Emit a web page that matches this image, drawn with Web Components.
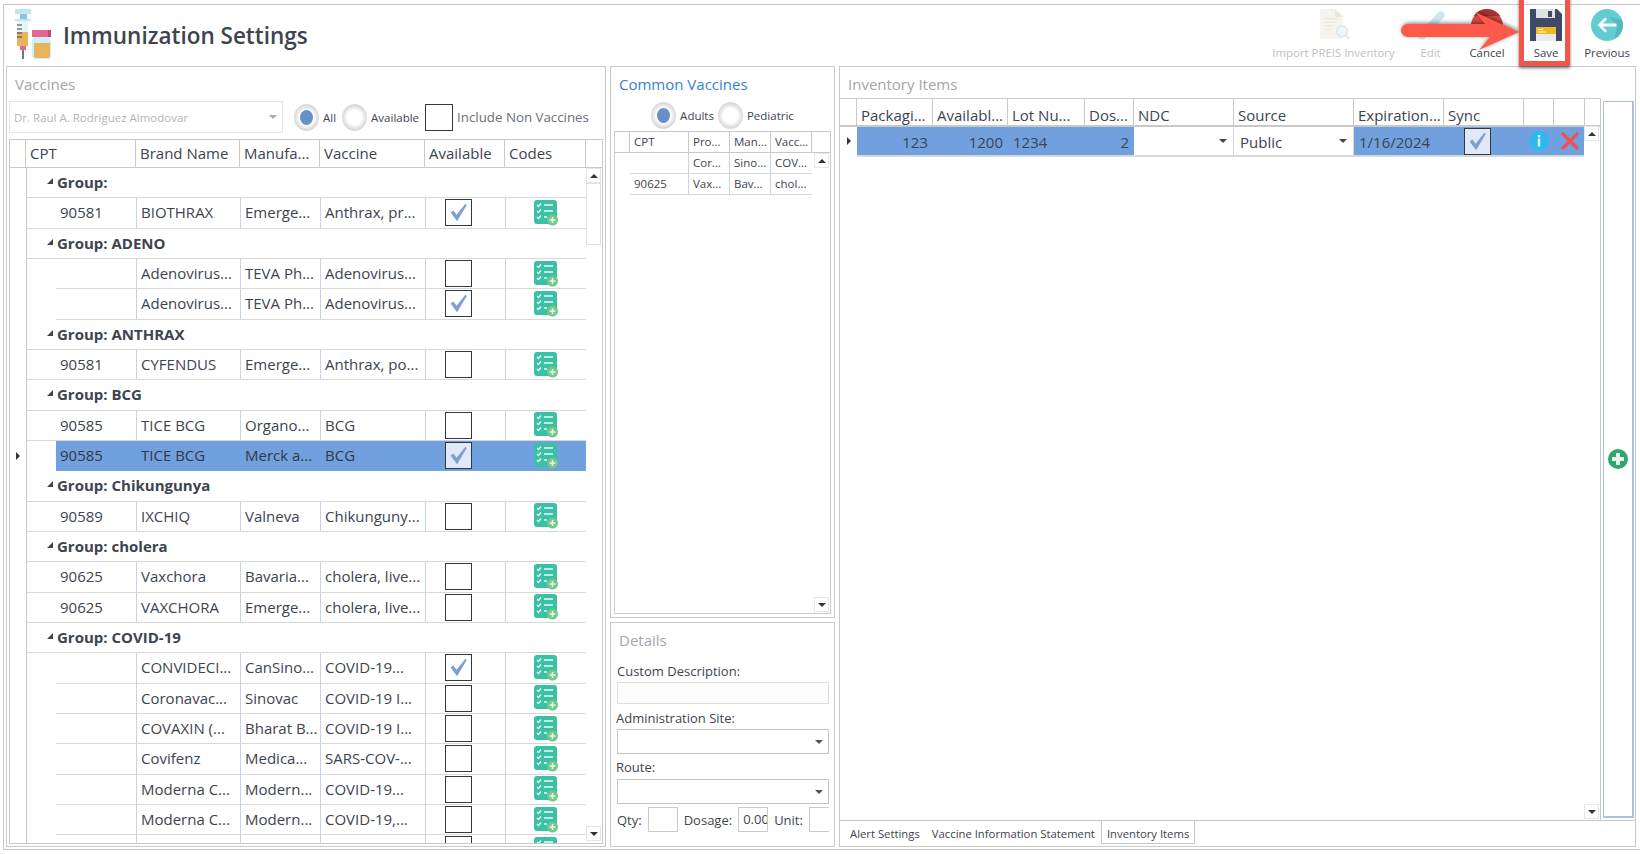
<!DOCTYPE html>
<html>
<head>
<meta charset="utf-8">
<title>Immunization Settings</title>
<style>
  html, body { margin: 0; height: 100%; background: #fff; overflow: hidden; }
  body { font-family: "Open Sans", "Noto Sans", sans-serif; color: #3d4450; }
</style>
</head>
<body>
<immunization-app></immunization-app>

<script>
// icons
const ICONS = {
  codes: `<svg viewBox="0 0 26 26" width="26" height="26">
    <rect x="1" y="0" width="23" height="24" rx="3" fill="#3bbfa5"/>
    <g fill="none" stroke="#e8fbf5" stroke-width="1.3">
      <path d="M4 5l1.5 1.5L8 3.5M4 11l1.5 1.5L8 9.500M4 17l1.5 1.5L8 15.500"/>
      <path d="M11 5h9M11 11h9M11 17h3"/>
    </g>
    <circle cx="19.500" cy="20" r="5.500" fill="#72c888"/>
    <path d="M19.500 17v6M16.500 20h6" stroke="#e8f8ec" stroke-width="1.600"/>
  </svg>`,
  check: `<svg viewBox="0 0 26 26" width="26" height="26"><path d="M5 13.500l3-2 3.500 4.500L21 4l1.500 1.500L12 23z" fill="#7f9fd2"/></svg>`,
  vaccine: `<svg viewBox="0 0 37 50" width="37" height="50">
    <path d="M0 0h16v5H0z" fill="#bfe6f2"/><path d="M5 5h7v5H5z" fill="#8fc4dc"/>
    <path d="M0 10h16v2H0z" fill="#bfe6f2"/>
    <path d="M2 12h11v11H2z" fill="#e6f3f7"/><path d="M2 23h11v14H2z" fill="#e7b45c"/>
    <path d="M2 16h5M2 20h5M2 24h5M2 28h5" stroke="#33415a" stroke-width="1.200"/>
    <path d="M5 37h6v4H5z" fill="#e2688d"/><path d="M7 41h2v9H7z" fill="#777"/>
    <path d="M17 21h19v7H17z" fill="#e2688d"/><path d="M33 21h3v7h-3z" fill="#b84f70"/>
    <path d="M19 28h15c1 2 2 3 2 6v13c0 2-1 3-3 3H20c-2 0-3-1-3-3V34c0-3 1-4 2-6z" fill="#cfeef7"/>
    <path d="M19 34h16v13c0 1-1 2-2 2H21c-1 0-2-1-2-2z" fill="#e7b45c"/>
  </svg>`,
  doc: `<svg viewBox="0 0 36 36" width="32" height="32">
    <path d="M2 0h17l9 9v25H2z" fill="#f4f2ea"/><path d="M19 0l9 9h-9z" fill="#e7e3d4"/>
    <path d="M7 11h14M7 15h14M7 19h10M7 23h8" stroke="#e8e5d8" stroke-width="1.500"/>
    <circle cx="27" cy="25" r="6" fill="#e8f3f8" stroke="#cfdfe8" stroke-width="1.500"/>
    <path d="M31 29l4 5" stroke="#d3dfe6" stroke-width="2"/>
  </svg>`,
  edit: `<svg viewBox="0 0 36 36" width="32" height="32"><path d="M4 28L26 4c2-2 4-2 6 0s2 4 0 6L10 34H4z" fill="#bfe1ec"/></svg>`,
  cancel: `<svg viewBox="0 0 36 36" width="32" height="32"><path d="M0.500 23A18 18 0 1 1 35.500 23z" fill="#d94a45"/><path d="M3 8a18 18 0 0 1 30 0z" fill="#a8322f"/></svg>`,
  save: `<svg viewBox="0 0 32 32" width="32" height="32">
    <path d="M0 0h27l5 5v27H0z" fill="#404a68"/>
    <path d="M6 0h19v9H6z" fill="#dfe3e4"/><path d="M18 2h4v6h-4z" fill="#404a68"/>
    <path d="M6 18h20v14H6z" fill="#e9eced"/><path d="M6 18h20v7H6z" fill="#eeb91f"/>
    <path d="M8 20.500h5M8 23h8" stroke="#fff" stroke-width="1.100"/>
  </svg>`,
  previous: `<svg viewBox="0 0 34 34" width="32" height="32">
    <circle cx="17" cy="17" r="17" fill="#62cdd0"/>
    <path d="M19 8l9 9-3 15a17 17 0 0 0 9-15 17 17 0 0 0-1-5z" fill="#49b2b8" opacity=".7"/>
    <path d="M15 9l-8 8 8 8 2-2-4.500-4.500H27v-3H12.500L17 11z" fill="#fff"/>
  </svg>`,
  info: `<svg viewBox="0 0 20 20" width="20" height="20"><circle cx="10" cy="10" r="10" fill="#2fb8f0"/><rect x="8.800" y="4" width="2.400" height="2.400" fill="#e6f8ff"/><rect x="8.800" y="7.500" width="2.400" height="8" fill="#e6f8ff"/></svg>`,
  cross: `<svg viewBox="0 0 20 20" width="20" height="20"><path d="M2 2l16 16M18 2L2 18" stroke="#ee5150" stroke-width="3.400"/></svg>`,
  add: `<svg viewBox="0 0 20 20" width="20" height="20"><circle cx="10" cy="10" r="10" fill="#2ea66d"/><path d="M10 4v12M4 10h12" stroke="#e6f3ec" stroke-width="4"/></svg>`,
};

// group box with a caption
class GroupPanel extends HTMLElement {
  connectedCallback() {
    const root = this.shadowRoot || this.attachShadow({ mode: 'open' });
    const color = this.getAttribute('caption-color') || '#a3a6aa';
    root.innerHTML = `<style>
      :host { display: flex; flex-direction: column; box-sizing: border-box; border: 1px solid #c9c9c9; background: #fff; min-height: 0; min-width: 0; overflow: hidden; }
      .cap { flex: none; font-size: 15px; line-height: 20px; padding: 7px 0 0 8px; height: 31px; box-sizing: border-box; color: ${color}; white-space: nowrap; }
      .body { flex: 1; min-height: 0; display: flex; flex-direction: column; }
    </style><div class="cap">${this.getAttribute('caption') || ''}</div><div class="body"><slot></slot></div>`;
  }
}

// one toolbar button, icon over label
class ToolButton extends HTMLElement {
  connectedCallback() {
    const root = this.shadowRoot || this.attachShadow({ mode: 'open' });
    const off = this.hasAttribute('disabled');
    root.innerHTML = `<style>
      :host { display: flex; flex-direction: column; align-items: center; width: ${this.getAttribute('w')}px; }
      .i { height: 33px; display: flex; align-items: flex-start; justify-content: center; ${off ? 'opacity:.8;' : ''} }
      .t { font-size: 11.400px; line-height: 16px; margin-top: 3px; white-space: nowrap; color: ${off ? '#c0bfbc' : '#3d4450'}; }
    </style><div class="i">${ICONS[this.getAttribute('icon')]}</div><div class="t">${this.getAttribute('label')}</div>`;
  }
}

class RadioOpt extends HTMLElement {
  connectedCallback() {
    const root = this.shadowRoot || this.attachShadow({ mode: 'open' });
    const on = this.hasAttribute('checked');
    root.innerHTML = `<style>
      :host { display: inline-flex; align-items: center; gap: 4px; font-size: 11.500px; color: #3d4450; }
      .r { width: 25px; height: 27px; border-radius: 50%; background: radial-gradient(circle, #fff 38%, #d8d8d8 68%, #efefef 100%); display: flex; align-items: center; justify-content: center; }
      .d { width: 13px; height: 15px; border-radius: 50%; background: ${on ? '#6790c9' : '#fff'}; }
    </style><span class="r"><span class="d"></span></span><span>${this.getAttribute('label')}</span>`;
  }
}

class CheckBox extends HTMLElement {
  connectedCallback() {
    const root = this.shadowRoot || this.attachShadow({ mode: 'open' });
    const bg = this.getAttribute('bg') || 'transparent';
    root.innerHTML = `<style>
      :host { display: inline-block; box-sizing: border-box; width: 27px; height: 27px; border: 1.500px solid #33383f; background: ${bg}; flex: none; }
      svg { display: block; margin: 0; width: 24px; height: 24px; }
    </style>${this.hasAttribute('checked') ? ICONS.check : ''}`;
  }
}

class ComboBox extends HTMLElement {
  connectedCallback() {
    const root = this.shadowRoot || this.attachShadow({ mode: 'open' });
    root.innerHTML = `<style>
      :host { display: flex; align-items: center; box-sizing: border-box; border: 1px solid var(--combo-border, #c4c4c4); background: #fff; height: 25px; overflow: hidden; }
      .v { flex: 1; padding-left: 4px; padding-top: var(--combo-pad, 0); white-space: nowrap; overflow: hidden; }
      .a { flex: none; width: 0; height: 0; margin: 0 5px; border: 4px solid transparent; border-top: 4px solid var(--combo-arrow, #444); border-bottom: 0; }
    </style><span class="v"><slot></slot></span><span class="a"></span>`;
  }
}

// scrollbar track with the two arrow buttons, sits over the grid edge
class GridScroll extends HTMLElement {
  connectedCallback() {
    const root = this.shadowRoot || this.attachShadow({ mode: 'open' });
    const thumb = this.getAttribute('thumb');
    root.innerHTML = `<style>
      :host { display: flex; flex-direction: column; align-items: stretch; justify-content: space-between; width: 15px; box-sizing: border-box; background: #fff; }
      .b { height: 15px; box-sizing: border-box; border: 1px solid #e6e6e6; display: flex; align-items: center; justify-content: center; background: #fff; flex: none; }
      .u { width: 0; height: 0; border: 4px solid transparent; border-bottom: 4px solid #333; border-top: 0; }
      .d { width: 0; height: 0; border: 4px solid transparent; border-top: 4px solid #333; border-bottom: 0; }
      .th { height: ${thumb || 0}px; border: 1px solid #e0e0e0; box-sizing: border-box; margin-top: 0; ${thumb ? '' : 'display:none;'} }
      .sp { flex: 1; }
    </style><div class="b"><span class="u"></span></div><div class="th"></div><div class="sp"></div><div class="b"><span class="d"></span></div>`;
  }
}

class VaccinesGrid extends HTMLElement {
  connectedCallback() {
    const root = this.attachShadow({ mode: 'open' });
    const data = [
      ['g', 'Group:'],
      ['90581', 'BIOTHRAX', 'Emerge...', 'Anthrax, pr...', 1],
      ['g', 'Group: ADENO'],
      ['', 'Adenovirus...', 'TEVA Ph...', 'Adenovirus...', 0],
      ['', 'Adenovirus...', 'TEVA Ph...', 'Adenovirus...', 1],
      ['g', 'Group: ANTHRAX'],
      ['90581', 'CYFENDUS', 'Emerge...', 'Anthrax, po...', 0],
      ['g', 'Group: BCG'],
      ['90585', 'TICE BCG', 'Organo...', 'BCG', 0],
      ['90585', 'TICE BCG', 'Merck a...', 'BCG', 1, 'sel'],
      ['g', 'Group: Chikungunya'],
      ['90589', 'IXCHIQ', 'Valneva', 'Chikunguny...', 0],
      ['g', 'Group: cholera'],
      ['90625', 'Vaxchora', 'Bavaria...', 'cholera, live...', 0],
      ['90625', 'VAXCHORA', 'Emerge...', 'cholera, live...', 0],
      ['g', 'Group: COVID-19'],
      ['', 'CONVIDECI...', 'CanSino...', 'COVID-19...', 1],
      ['', 'Coronavac...', 'Sinovac', 'COVID-19 I...', 0],
      ['', 'COVAXIN (...', 'Bharat B...', 'COVID-19 I...', 0],
      ['', 'Covifenz', 'Medica...', 'SARS-COV-...', 0],
      ['', 'Moderna C...', 'Modern...', 'COVID-19...', 0],
      ['', 'Moderna C...', 'Modern...', 'COVID-19,...', 0],
      ['', '', '', '', 0],
    ];
    const rows = data.map(r => {
      if (r[0] === 'g') {
        return `<div class="g"><span class="tri"></span><b>${r[1]}</b></div>`;
      }
      const sel = r[5] === 'sel';
      return `<div class="r ${sel ? 'sel' : ''}">
        <div class="mark">${sel ? '<span class="ptr"></span>' : ''}</div>
        <div class="c cpt ${r[0] ? '' : 'blank'}">${r[0]}</div>
        <div class="c">${r[1]}</div><div class="c">${r[2]}</div><div class="c">${r[3]}</div>
        <div class="c mid chk"><check-box ${r[4] ? 'checked' : ''} ${sel ? 'bg="#dfe9f7"' : ''}></check-box></div>
        <div class="c mid ic">${ICONS.codes}</div>
      </div>`;
    }).join('');
    root.innerHTML = `<style>
      :host { display: block; position: relative; flex: 1; min-height: 0; margin: 0 2px 2px 2px; border: 1px solid #c9c9c9; overflow: hidden; font-size: 15px; color: #3d4450; }
      .h { display: grid; grid-template-columns: 16px 110px 104px 80px 105px 80px 81px 17px; height: 27px; border-bottom: 1px solid #c9c9c9; }
      .h div { border-right: 1px solid #c9c9c9; padding-left: 4px; line-height: 26px; white-space: nowrap; overflow: hidden; }
      .h div:last-child { border-right: 0; }
      .list { margin-left: 16px; border-left: 1px solid #c9c9c9; }
      .g { height: 30.330px; box-sizing: border-box; width: 559px; border-bottom: 1px solid #d8d8d8; line-height: 29px; padding-left: 20px; display: flex; align-items: center; gap: 4px; }
      .g b { font-weight: 700; font-size: 15px; }
      .tri { width: 0; height: 0; border-style: solid; border-width: 0 0 6px 6px; border-color: transparent transparent #444 transparent; margin-top: -3px; }
      .r { display: grid; grid-template-columns: 29px 81px 104px 80px 105px 80px 81px; height: 30.330px; width: 560px; box-sizing: border-box; position: relative; }
      .mark { position: absolute; left: -17px; width: 16px; top: 0; bottom: 0; display: flex; align-items: center; justify-content: center; }
      .ptr { width: 0; height: 0; border: 4px solid transparent; border-left: 4px solid #333; border-right: 0; }
      .r .c { border-right: 1px solid #c5d4e6; border-bottom: 1px solid #d8d8d8; padding-left: 4px; line-height: 29px; white-space: nowrap; overflow: hidden; box-sizing: border-box; }
      .r .c.mid { display: flex; align-items: center; justify-content: center; padding: 0; }
      .r .c.chk { padding-right: 14px; }
      .r .c.ic { border-right: 0; padding-right: 2px; }
      .r .cpt { text-align: left; grid-column: 1 / 3; padding-left: 33px; border-right: 1px solid #c5d4e6; }
      .r .cpt.blank { grid-column: 1 / 3; margin-left: 29px; }
      .sel .c { background: #71a0df; color: #33393f; border-color: #71a0df; border-right-color: #71a0df; }
      .sel .cpt { margin-left: 29px; padding-left: 4px; }
      svg { display: block; }
      grid-scroll { position: absolute; right: 1px; top: 28px; bottom: 2px; }
    </style>
    <div class="h"><div></div><div>CPT</div><div>Brand Name</div><div>Manufa...</div><div>Vaccine</div><div>Available</div><div>Codes</div><div></div></div>
    <div class="list">${rows}</div>
    <grid-scroll thumb="62"></grid-scroll>`;
  }
}

class CommonGrid extends HTMLElement {
  connectedCallback() {
    const root = this.attachShadow({ mode: 'open' });
    const row = (a, b, c, d) => `<div class="r"><div class="${a ? '' : 'e'}">${a}</div><div>${b}</div><div>${c}</div><div>${d}</div></div>`;
    root.innerHTML = `<style>
      :host { display: block; position: relative; flex: 1; min-height: 0; margin: 2px 3px 3px 3px; border: 1px solid #c9c9c9; font-size: 11.500px; overflow: hidden; color: #3d4450; }
      .h, .r { display: grid; grid-template-columns: 59px 41px 41px 41px; margin-left: 15px; }
      .h { height: 20px; border-bottom: 1px solid #c9c9c9; margin-left: 0; grid-template-columns: 15px 59px 41px 41px 41px; }
      .h div { border-right: 1px solid #c9c9c9; line-height: 20px; padding-left: 4px; overflow: hidden; white-space: nowrap; }
      .h div:first-child { padding: 0; }
      .r { height: 21px; }
      .r div { border-right: 1px solid #c5d4e6; border-bottom: 1px solid #d8d8d8; line-height: 20px; padding-left: 4px; overflow: hidden; white-space: nowrap; }
      .r div:last-child { border-right: 0; }
      grid-scroll { position: absolute; right: 1px; top: 21px; bottom: 1px; }
    </style>
    <div class="h"><div></div><div>CPT</div><div>Pro...</div><div>Man...</div><div>Vacc...</div></div>
    ${row('', 'Cor...', 'Sino...', 'COV...')}
    ${row('90625', 'Vax...', 'Bav...', 'chol...')}
    <grid-scroll></grid-scroll>`;
  }
}

class DetailsForm extends HTMLElement {
  connectedCallback() {
    const root = this.attachShadow({ mode: 'open' });
    root.innerHTML = `<style>
      :host { display: flex; flex-direction: column; font-size: 13px; color: #3d4450; padding: 0 5px 0 5px; --combo-arrow: #555; }
      .l { line-height: 18px; white-space: nowrap; }
      .txt { height: 22px; box-sizing: border-box; border: 1px solid #dcdcdc; background: #fdfdfd; margin: 2px 0 0 1px; }
      combo-box { margin: 2px 0 0 1px; }
      .qty { display: flex; align-items: center; margin-top: 3px; white-space: nowrap; overflow: hidden; margin-left: 1px; }
      .box { box-sizing: border-box; height: 25px; border: 1px solid #c9c9c9; flex: none; font-size: 13px; line-height: 23px; padding-left: 4px; overflow: hidden; }
    </style>
    <div class="l" style="margin:8px 0 0 1px">Custom Description:</div>
    <div class="txt"></div>
    <div class="l" style="margin-top:5px">Administration Site:</div>
    <combo-box></combo-box>
    <div class="l" style="margin-top:4px">Route:</div>
    <combo-box style="margin-top:3px"></combo-box>
    <div class="qty">Qty:<div class="box" style="width:30px;margin:0 6px 0 6px"></div>Dosage:<div class="box" style="width:30px;margin:0 6px;">0.00</div>Unit:<div class="box" style="width:30px;margin-left:6px"></div></div>`;
  }
}

class InventoryGrid extends HTMLElement {
  connectedCallback() {
    const root = this.attachShadow({ mode: 'open' });
    root.innerHTML = `<style>
      :host { display: block; position: relative; flex: 1; min-height: 0; font-size: 15px; color: #3d4450; overflow: hidden; border-top: 1px solid #c9c9c9; }
      .h { display: grid; grid-template-columns: 17px 76px 75px 77px 49px 100px 120px 90px 80px 30px 31px; height: 26px; border-bottom: 2px solid #c9c9c9; }
      .h div { border-right: 1px solid #c9c9c9; padding-left: 4px; line-height: 32px; white-space: nowrap; overflow: hidden; }
      .r { display: grid; grid-template-columns: 76px 75px 77px 49px 100px 120px 90px 80px 30px 31px; margin-left: 17px; height: 30px; width: 728px; position: relative; }
      .r > div { background: #71a0df; border-bottom: 2px solid #d8d8d8; white-space: nowrap; overflow: hidden; line-height: 30px; padding: 0 5px; box-sizing: border-box; }
      .num { text-align: right; }
      .r > .cmb { background: #fff; padding: 2px 0 2px 1px; border-right: 1px solid #d8d8d8; --combo-border: transparent; --combo-pad: 2px; line-height: 22px; }
      .cmb combo-box { height: 24px; }
      .r > .mid { display: flex; align-items: center; justify-content: center; padding: 0; }
      .r > .sync { padding-right: 13px; }
      .ptr { position: absolute; left: 7px; top: 38px; width: 0; height: 0; border: 4px solid transparent; border-left: 4px solid #333; border-right: 0; }
      svg { display: block; }
      grid-scroll { position: absolute; right: 1px; top: 27px; bottom: 1px; }
    </style>
    <div class="h"><div></div><div>Packagi...</div><div>Availabl...</div><div>Lot Nu...</div><div>Dos...</div><div>NDC</div><div>Source</div><div>Expiration...</div><div>Sync</div><div></div><div></div></div>
    <span class="ptr"></span>
    <div class="r">
      <div class="num">123</div><div class="num">1200</div><div>1234</div><div class="num">2</div>
      <div class="cmb"><combo-box></combo-box></div>
      <div class="cmb"><combo-box>Public</combo-box></div>
      <div>1/16/2024</div>
      <div class="mid sync"><check-box checked bg="#dfe9f7"></check-box></div>
      <div class="mid">${ICONS.info}</div>
      <div class="mid">${ICONS.cross}</div>
    </div>
    <grid-scroll></grid-scroll>`;
  }
}

// red box and arrow somebody drew on top of the screenshot
class SaveCallout extends HTMLElement {
  connectedCallback() {
    const root = this.attachShadow({ mode: 'open' });
    root.innerHTML = `<style>
      :host { display: block; position: absolute; left: 1395px; top: 0; width: 180px; height: 72px; pointer-events: none; }
      .box { position: absolute; left: 124px; top: -6px; width: 41px; height: 62px; border: 5px solid #f2564b; box-shadow: 0 2px 3px rgba(0,0,0,.55); }
      svg { position: absolute; left: 6px; top: 9px; filter: drop-shadow(1px -1px 2px rgba(0,0,0,.5)); }
    </style>
    <svg width="122" height="52" viewBox="0 0 122 52">
      <path d="M6.500 15H84L74 3L118 23L78 41L89 28H6.500a6.500 6.500 0 0 1 0-13z" fill="#fe5a4c"/>
    </svg>
    <div class="box"></div>`;
  }
}

class ImmunizationApp extends HTMLElement {
  connectedCallback() {
    const root = this.attachShadow({ mode: 'open' });
    root.innerHTML = `<style>
      :host { display: flex; flex-direction: column; position: relative; box-sizing: border-box; height: 854px; width: 1640px; padding: 4px 0 4px 3px; }
      .win { flex: 1; min-height: 0; display: flex; flex-direction: column; border: 1px solid #c9c9c9; border-right: 0; padding: 0 0 2px 2px; }
      .top { flex: none; height: 61px; display: flex; align-items: flex-start; justify-content: space-between; }
      .brand { display: flex; align-items: center; gap: 11px; margin: 4px 0 0 9px; height: 50px; }
      .brand svg { display: block; flex: none; }
      .brand h1 { margin: 0; padding-top: 3px; font-size: 22.500px; font-weight: 600; color: #3d4450; white-space: nowrap; }
      .tools { display: flex; padding: 4px 2px 0 0; }
      .main { flex: 1; min-height: 0; display: grid; grid-template-columns: 600px 225px 797px; column-gap: 4px; }
      .mid { display: flex; flex-direction: column; gap: 4px; min-height: 0; }
      .filters { flex: none; display: flex; align-items: center; height: 32px; margin: 3px 0 6px 2px; font-size: 13px; color: #3d4450; --combo-border: #e6e6e6; --combo-arrow: #aaa; }
      .filters combo-box { width: 274px; height: 32px; font-size: 11.500px; color: #b4b4b4; margin-right: 11px; }
      .filters radio-opt { margin-right: 6px; }
      .filters .non { margin-left: 4px; white-space: nowrap; color: #6a6f78; font-size: 13.300px; }
      .filters check-box { width: 28px; height: 27px; margin-left: 0; }
      .rad2 { flex: none; display: flex; justify-content: center; align-items: center; gap: 4px; height: 26px; margin: 4px 0 1px; }
      .inv-body { flex: 1; min-height: 0; display: flex; border-bottom: 1px solid #c9c9c9; }
      .invwrap { flex: 1; min-width: 0; display: flex; flex-direction: column; border-right: 1px solid #c9c9c9; }
      .add { flex: none; width: 31px; box-sizing: border-box; margin: 3px 1px 2px 2px; border: 1px solid #a9c3e6; border-bottom-width: 2px; border-right-width: 2px; display: flex; align-items: center; justify-content: center; }
      .tabs { flex: none; height: 25px; display: flex; align-items: flex-start; font-size: 11.300px; color: #3d4450; padding-left: 4px; }
      .tab { padding: 1px 6px 0; line-height: 24px; height: 23px; box-sizing: border-box; white-space: nowrap; }
      .tab.on { border: 1px solid #c9c9c9; border-top: 0; padding: 1px 5px 0; }
    </style>
    <div class="win">
      <div class="top">
        <div class="brand">${ICONS.vaccine}<h1>Immunization Settings</h1></div>
        <div class="tools">
          <tool-button w="139" icon="doc" label="Import PREIS Inventory" disabled></tool-button>
          <tool-button w="55" icon="edit" label="Edit" disabled></tool-button>
          <tool-button w="58" icon="cancel" label="Cancel"></tool-button>
          <tool-button w="60" icon="save" label="Save"></tool-button>
          <tool-button w="62" icon="previous" label="Previous"></tool-button>
        </div>
      </div>
      <div class="main">
        <group-panel caption="Vaccines">
          <div class="filters">
            <combo-box>Dr. Raul A. Rodriguez Almodovar</combo-box>
            <radio-opt checked label="All"></radio-opt>
            <radio-opt label="Available"></radio-opt>
            <check-box></check-box>
            <span class="non">Include Non Vaccines</span>
          </div>
          <vaccines-grid></vaccines-grid>
        </group-panel>
        <div class="mid">
          <group-panel caption="Common Vaccines" caption-color="#3a7fcc" style="flex:1">
            <div class="rad2"><radio-opt checked label="Adults"></radio-opt><radio-opt label="Pediatric"></radio-opt></div>
            <common-grid></common-grid>
          </group-panel>
          <group-panel caption="Details" style="flex:none;height:225px">
            <details-form></details-form>
          </group-panel>
        </div>
        <group-panel caption="Inventory Items">
          <div class="inv-body">
            <div class="invwrap"><inventory-grid></inventory-grid></div>
            <div class="add">${ICONS.add}</div>
          </div>
          <div class="tabs">
            <div class="tab">Alert Settings</div>
            <div class="tab">Vaccine Information Statement</div>
            <div class="tab on">Inventory Items</div>
          </div>
        </group-panel>
      </div>
    </div>
    <save-callout></save-callout>`;
  }
}

customElements.define('check-box', CheckBox);
customElements.define('combo-box', ComboBox);
customElements.define('radio-opt', RadioOpt);
customElements.define('grid-scroll', GridScroll);
customElements.define('group-panel', GroupPanel);
customElements.define('tool-button', ToolButton);
customElements.define('vaccines-grid', VaccinesGrid);
customElements.define('common-grid', CommonGrid);
customElements.define('details-form', DetailsForm);
customElements.define('inventory-grid', InventoryGrid);
customElements.define('save-callout', SaveCallout);
customElements.define('immunization-app', ImmunizationApp);
</script>
</body>
</html>
